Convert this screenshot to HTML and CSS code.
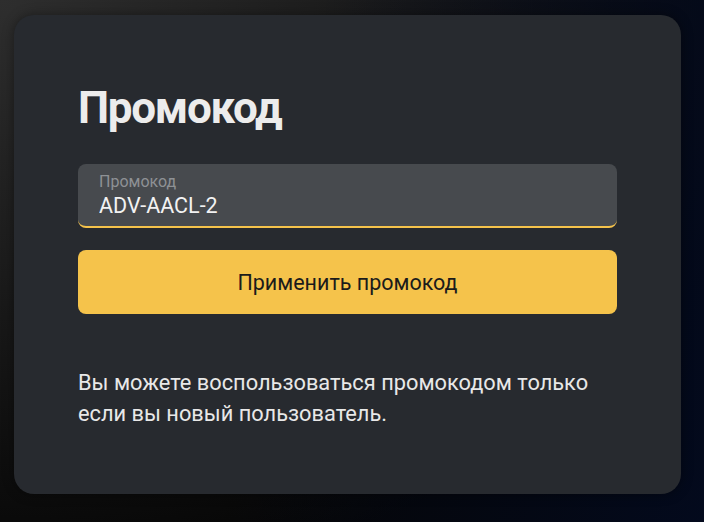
FILE: index.html
```html
<!DOCTYPE html>
<html lang="ru">
<head>
    <meta charset="UTF-8">
    <title>Промокод</title>
    <link rel="stylesheet" href="styles.css">
</head>
<body>
    <div class="promo-card">
        <h1 class="promo-title">Промокод</h1>

        <label class="promo-field">
            <span class="promo-label">Промокод</span>
            <input class="promo-input" type="text" value="ADV-AACL-2">
        </label>

        <button class="promo-button" type="button">Применить промокод</button>

        <p class="promo-note">Вы можете воспользоваться промокодом только если вы новый пользователь.</p>
    </div>
</body>
</html>
```

FILE: styles.css
```css
*{
    margin: 0;
    padding: 0;
    box-sizing: border-box;
}

html, body{
    height: 100%;
}

body{
    font-family: Roboto, "Noto Sans", sans-serif;
    background: radial-gradient(ellipse at 0% 0%, #2e2e2e 0%, #171717 45%, #050505 80%),
                #000;
    background-color: #000;
    position: relative;
    padding: 15px 23px 28px 14px;
}

body::before{
    content: "";
    position: absolute;
    inset: 0;
    background: linear-gradient(100deg, rgba(0,0,0,0) 40%, rgba(3,10,30,0.95) 100%);
    pointer-events: none;
}

.promo-card{
    position: relative;
    width: 667px;
    height: 479px;
    background-color: #272a2f;
    border-radius: 20px;
    padding: 67px 64px 64px 64px;
    box-shadow: 0 0 12px rgba(0,0,0,0.4);
}

.promo-title{
    font-size: 44px;
    font-weight: 700;
    line-height: 52px;
    letter-spacing: -1.3px;
    color: #ececec;
    margin-bottom: 30px;
}

.promo-field{
    display: flex;
    flex-direction: column;
    height: 64px;
    background-color: #474a4e;
    border-radius: 8px;
    border-bottom: 2px solid #f5c34b;
    padding: 9px 21px 0 21px;
}

.promo-label{
    font-size: 16px;
    line-height: 18px;
    color: #8e9195;
}

.promo-input{
    margin-top: 2px;
    font-family: inherit;
    font-size: 21.5px;
    line-height: 26px;
    color: #f2f2f2;
    background: transparent;
    border: none;
    outline: none;
    width: 100%;
}

.promo-button{
    display: block;
    width: 100%;
    height: 64px;
    margin-top: 22px;
    border: none;
    border-radius: 8px;
    background-color: #f5c34b;
    color: #1b1b1b;
    font-family: inherit;
    font-size: 21.5px;
}

.promo-note{
    margin-top: 53px;
    font-size: 21.8px;
    line-height: 31px;
    color: #e8e8e8;
}
```
